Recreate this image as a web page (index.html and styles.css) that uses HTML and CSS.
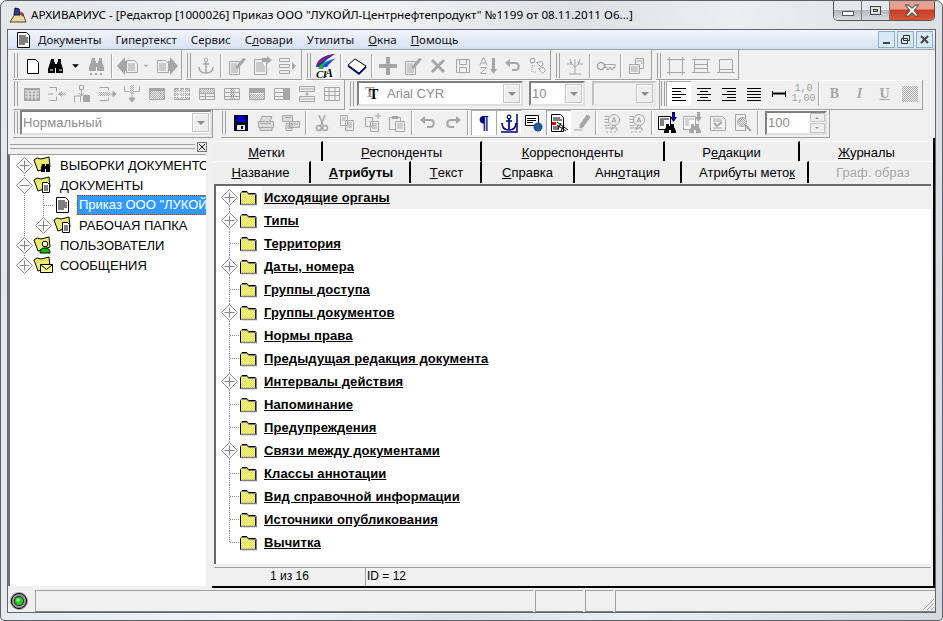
FILE: index.html
```html
<!DOCTYPE html>
<html lang="ru">
<head>
<meta charset="utf-8">
<title>АРХИВАРИУС</title>
<link rel="stylesheet" href="styles.css">
</head>
<body>
<svg class="defs" aria-hidden="true">
<defs>
<pattern id="dy" width="2" height="2" patternUnits="userSpaceOnUse"><rect width="2" height="2" fill="#ffff40"/><rect width="1" height="1" fill="#d8d8a0"/><rect x="1" y="1" width="1" height="1" fill="#d8d8a0"/></pattern>
<pattern id="dg" width="2" height="2" patternUnits="userSpaceOnUse"><rect width="2" height="2" fill="#f4f4f4"/><rect width="1" height="1" fill="#a6a6a6"/><rect x="1" y="1" width="1" height="1" fill="#a6a6a6"/></pattern>
<symbol id="new" viewBox="0 0 20 20"><path d="M4.500 3.500h8l3 3v11h-11z" fill="#fff" stroke="currentColor"/></symbol>
<symbol id="bin" viewBox="0 0 20 20"><path d="M5 3h3v3h1v2h2V6h1V3h3v4l2 6v4h-7v-5h-1v5H2v-4l2-6z" fill="currentColor"/><path d="M4 14h3M13 14h3" stroke="#fff"/></symbol>
<symbol id="bing" viewBox="0 0 20 20"><path d="M5 2h3v3h1v2h2V5h1V2h3v4l2 5v4h-7v-4h-1v4H2v-4l2-5z" fill="currentColor"/><path d="M3 17h2v2H3zM8 17h2v2H8zM13 17h2v2h-2z" fill="currentColor"/></symbol>
<symbol id="drop" viewBox="0 0 20 20"><path d="M6 8h8l-4 4z" fill="currentColor"/></symbol>
<symbol id="back" viewBox="0 0 24 20"><path d="M9 1 1 10l8 9v-4h2V5H9z" fill="currentColor"/><path d="M10.500 4.500h8l3 3v9h-11z" fill="#f0f0f0" stroke="currentColor"/><path d="M12 8h7M12 10h7M12 12h7M12 14h7" stroke="currentColor"/></symbol>
<symbol id="fwd" viewBox="0 0 24 20"><path d="M15 1l8 9-8 9v-4h-2V5h2z" fill="currentColor"/><path d="M2.500 4.500h8l3 3v9h-11z" fill="#f0f0f0" stroke="currentColor"/><path d="M4 8h7M4 10h7M4 12h7M4 14h7" stroke="currentColor"/></symbol>
<symbol id="anchor" viewBox="0 0 20 20"><circle cx="10" cy="4" r="1.700" fill="none" stroke="currentColor"/><path d="M10 6v11M7 8h6M3 11c0 4 3 6 7 6s7-2 7-6" fill="none" stroke="currentColor" stroke-width="1.500"/></symbol>
<symbol id="docpen" viewBox="0 0 20 20"><path d="M2.500 5.500h10v13h-10z" fill="#f0f0f0" stroke="currentColor"/><path d="M4 8h6M4 10h6M4 12h7M4 14h7M4 16h7" stroke="currentColor"/><path d="M9 10 16 2l3 1-7 9-3 1z" fill="currentColor"/></symbol>
<symbol id="docarr" viewBox="0 0 20 20"><path d="M2.500 3.500h9l3 3v12h-12z" fill="#f0f0f0" stroke="currentColor"/><path d="M4 7h7M4 9h8M4 11h9M4 13h9M4 15h9" stroke="currentColor"/><path d="M10 2h5V0l5 4-5 4V6h-5z" fill="currentColor"/></symbol>
<symbol id="listarr" viewBox="0 0 20 20"><path d="M2.500 2.500h10v3h-10zM2.500 8.500h10v3h-10zM2.500 14.500h10v3h-10z" fill="#f0f0f0" stroke="currentColor"/><path d="M15 6l4 4-4 4z" fill="currentColor"/></symbol>
<symbol id="logo" viewBox="0 0 24 26"><path d="M2 14C3 6 10 2 21 1c-6 4-11 7-14 13z" fill="#1030e0"/><path d="M2 14C3 9 10 3 21 1c1 1-1 1 0 0-8 3-12 6-15 9z" fill="#f00020"/><path d="M4 16c2-5 7-8 16-10-6 3-9 6-11 10z" fill="#10c020"/><path d="M8 14c2-3 6-6 14-9-4 3-7 6-9 9z" fill="#2040ff"/><path d="M2 16h20v9H2z" fill="#fff"/><text x="2" y="25" class="logot">Cl</text><text x="11" y="24" class="logot2">A</text></symbol>
<symbol id="book" viewBox="0 0 20 20"><path d="M1 9 8 3l11 7-7 7z" fill="#fff" stroke="#000"/><path d="M1 10l11 8 7-7" fill="none" stroke="#000080" stroke-width="1.500"/></symbol>
<symbol id="plus" viewBox="0 0 20 20"><path d="M8 1h4v7h7v4h-7v7H8v-7H1V8h7z" fill="currentColor"/></symbol>
<symbol id="x" viewBox="0 0 20 20"><path d="M3 5l2-2 5 5 5-5 2 2-5 5 5 5-2 2-5-5-5 5-2-2 5-5z" fill="currentColor"/></symbol>
<symbol id="sv" viewBox="0 0 20 20"><path d="M3.500 3.500h13v13h-13z" fill="#f0f0f0" stroke="currentColor"/><path d="M6.500 3.500h7v5h-7zM6.500 11.500h7v5h-7z" fill="none" stroke="currentColor"/></symbol>
<symbol id="az" viewBox="0 0 20 20"><path d="M14 2h3v11h2l-3.500 5L12 13h2z" fill="currentColor"/><path d="M2 9l3-7h1l3 7M3.500 7h4M2.500 11.500h6L2.500 17.500h6" fill="none" stroke="currentColor"/></symbol>
<symbol id="undo" viewBox="0 0 20 20"><path d="M4 7h8c5 0 5 7 0 7H9" fill="none" stroke="currentColor" stroke-width="2"/><path d="M2 7l5-4v8z" fill="currentColor"/></symbol>
<symbol id="redo" viewBox="0 0 20 20"><path d="M16 7H8c-5 0-5 7 0 7h3" fill="none" stroke="currentColor" stroke-width="2"/><path d="M18 7l-5-4v8z" fill="currentColor"/></symbol>
<symbol id="kids" viewBox="0 0 20 20"><path d="M2.500 2.500h4v4h-4zM8.500 6.500l5-1 2 3-3 2zM10.500 12.500l5-1 2 3-3 3z" fill="#f0f0f0" stroke="currentColor"/><path d="M4 7v9h5M4 10h4" fill="none" stroke="currentColor" stroke-dasharray="1 1"/></symbol>
<symbol id="bare" viewBox="0 0 20 20"><path d="M10 18V9M10 11 5 6M10 11l5-5M7 8H2M13 8h5M7 8 5 3M13 8l2-5M10 9V3M4 18h12" fill="none" stroke="currentColor"/></symbol>
<symbol id="key" viewBox="0 0 20 20"><circle cx="5" cy="10" r="3.500" fill="none" stroke="currentColor" stroke-width="1.500"/><path d="M9 8.500h10v3h-2v2h-2v-2h-2v2h-2v-2H9z" fill="none" stroke="currentColor"/></symbol>
<symbol id="docs" viewBox="0 0 20 20"><path d="M8.500 2.500h8v10h-8z" fill="#f0f0f0" stroke="currentColor"/><path d="M2.500 8.500h10v9h-10z" fill="#f0f0f0" stroke="currentColor"/><path d="M4 11h7M4 13h7M4 15h7M10 5h5M14 7h2" stroke="currentColor"/></symbol>
<symbol id="fr1" viewBox="0 0 20 20"><path d="M3.500 3.500h13v13h-13zM1 3.500h18M1 16.500h18M3.500 1v18M16.500 1v18" fill="none" stroke="currentColor"/></symbol>
<symbol id="fr2" viewBox="0 0 20 20"><path d="M3.500 3.500h13v13h-13zM3.500 8.500h13M3.500 12.500h13M1 3.500h18M1 16.500h18" fill="none" stroke="currentColor"/></symbol>
<symbol id="fr3" viewBox="0 0 20 20"><path d="M3.500 3.500h13v13h-13zM3.500 13.500h13M1 16.500h18M5 3.500h10" fill="none" stroke="currentColor"/></symbol>
<symbol id="tab" viewBox="0 0 20 20"><path d="M2 4h16v13H2z" fill="currentColor"/><path d="M3 7h14M3 10h14M3 13h14M6 7v9M10 7v9M14 7v9" stroke="#eee"/></symbol>
<symbol id="sp1" viewBox="0 0 20 20"><path d="M2.500 3.500h7v4M2.500 16.500h7v-4M1 10h5" fill="none" stroke="currentColor"/><path d="M11 10l4-3v6z" fill="currentColor"/><path d="M14 8.500h5v3h-5z" fill="url(#dg)"/></symbol>
<symbol id="sp2" viewBox="0 0 20 20"><path d="M7.500 1.500h4v4h-4zM2.500 18v-6h6v6" fill="none" stroke="currentColor"/><path d="M11 11h7v7h-7z" fill="currentColor"/><path d="M9.500 6v5M7 9l2.500 3L12 9" fill="none" stroke="currentColor"/></symbol>
<symbol id="sp3" viewBox="0 0 20 20"><path d="M2.500 3.500h9v3M2.500 16.500h9v-3" fill="none" stroke="currentColor"/><path d="M1.500 8h12v4h-12z" fill="url(#dg)"/><path d="M14 10l5 0M16 7l3 3-3 3z" fill="currentColor" stroke="currentColor"/></symbol>
<symbol id="sp4" viewBox="0 0 20 20"><path d="M2.500 2.500v5h5M17.500 2.500v5h-5" fill="none" stroke="currentColor"/><path d="M8 1h4v9H8z" fill="url(#dg)"/><path d="M10 10v7M7 14l3 4 3-4z" fill="currentColor" stroke="currentColor"/></symbol>
<symbol id="t1" viewBox="0 0 20 20"><path d="M2.500 4.500h15v11h-15z" fill="url(#dg)" stroke="currentColor"/><path d="M2 4h16v3H2z" fill="currentColor"/></symbol>
<symbol id="t2" viewBox="0 0 20 20"><path d="M2.500 4.500h15v11h-15z" fill="url(#dg)" stroke="currentColor"/><path d="M7.500 4v11M12.500 4v11M2 8.500h16M2 12.500h16" stroke="#eee"/></symbol>
<symbol id="t3" viewBox="0 0 20 20"><path d="M2.500 4.500h15v11h-15z" fill="#eee" stroke="currentColor"/><path d="M3 5h14v4H3z" fill="url(#dg)"/><path d="M2 9.500h16M2 12.500h16M8.500 9v6" stroke="currentColor"/></symbol>
<symbol id="t4" viewBox="0 0 20 20"><path d="M2.500 4.500h15v11h-15z" fill="#eee" stroke="currentColor"/><path d="M8 5h5v10H8z" fill="url(#dg)"/><path d="M2 8.500h16M2 12.500h16" stroke="currentColor"/></symbol>
<symbol id="t5" viewBox="0 0 20 20"><path d="M2.500 4.500h15v11h-15z" fill="#eee" stroke="currentColor"/><path d="M2 4h16v5H2z" fill="currentColor"/><path d="M3 10h14v5H3z" fill="url(#dg)"/></symbol>
<symbol id="t6" viewBox="0 0 20 20"><path d="M2.500 4.500h15v11h-15z" fill="#eee" stroke="currentColor"/><path d="M11 4h7v12h-7z" fill="currentColor"/><path d="M2 8.500h9M2 12.500h9" stroke="currentColor"/></symbol>
<symbol id="t7" viewBox="0 0 20 20"><path d="M2.500 2.500h15v5h-15zM2.500 12.500h15v5h-15zM2.500 5h15M2.500 15h15M10 8v4M8 10h4" fill="none" stroke="currentColor"/></symbol>
<symbol id="t8" viewBox="0 0 20 20"><path d="M2.500 3.500h15v13h-15zM2.500 7.500h15M2.500 11.500h15M7 3.500v13M13 3.500v13" fill="none" stroke="currentColor"/></symbol>
<symbol id="alignl" viewBox="0 0 20 20"><path d="M3 4.500h14M3 7.500h9M3 10.500h14M3 13.500h9M3 16.500h14" stroke="#000"/></symbol>
<symbol id="alignc" viewBox="0 0 20 20"><path d="M3 4.500h14M6 7.500h8M3 10.500h14M6 13.500h8M3 16.500h14" stroke="#000"/></symbol>
<symbol id="alignr" viewBox="0 0 20 20"><path d="M3 4.500h14M8 7.500h9M3 10.500h14M8 13.500h9M3 16.500h14" stroke="#000"/></symbol>
<symbol id="alignj" viewBox="0 0 20 20"><path d="M3 4.500h14M3 7.500h14M3 10.500h14M3 13.500h14M3 16.500h14" stroke="#000"/></symbol>
<symbol id="line" viewBox="0 0 20 20"><path d="M3 9.500h14" stroke="#000" stroke-width="2"/><path d="M3.500 7v6M16.500 7v6" stroke="#000"/></symbol>
<symbol id="dots" viewBox="0 0 20 20"><path d="M2 2h16v16H2z" fill="url(#dg)"/></symbol>
<symbol id="floppy" viewBox="0 0 20 20"><path d="M3 2h14v16H3z" fill="#000"/><path d="M6 3h8v6H6z" fill="#0000d0"/><path d="M4 4h1v13H4zM15 4h1v13h-1z" fill="#0000a0"/><path d="M6 12h8v5H6z" fill="#e8e8ff"/><path d="M10 13h2v3h-2z" fill="#000"/></symbol>
<symbol id="print" viewBox="0 0 20 20"><path d="M6 3.500h10l-2 5H4zM2.500 8.500h15v6h-15zM4 14.500h12v3H4z" fill="#ddd" stroke="currentColor"/><path d="M4 10.500h11" stroke="currentColor"/></symbol>
<symbol id="print2" viewBox="0 0 20 20"><path d="M1.500 2.500h10v6h-10zM8.500 8.500h10v6h-10zM5 10.500h6v7H5z" fill="#ddd" stroke="currentColor"/><path d="M4 4.500h6M10 11h7M6.500 13h4M6.500 15h4" stroke="currentColor"/></symbol>
<symbol id="cut" viewBox="0 0 20 20"><path d="M7 2l4 10M13 2l-4 10" stroke="currentColor" stroke-width="1.500" fill="none"/><circle cx="7" cy="15" r="2.500" fill="none" stroke="currentColor" stroke-width="1.500"/><circle cx="13" cy="15" r="2.500" fill="none" stroke="currentColor" stroke-width="1.500"/></symbol>
<symbol id="copy" viewBox="0 0 20 20"><path d="M3.500 2.500h7v10h-7zM8.500 7.500h8v10h-8z" fill="#eee" stroke="currentColor"/><path d="M5 5h4M5 7h3M10 10h5M10 12h5M10 14h5" stroke="currentColor"/></symbol>
<symbol id="copyp" viewBox="0 0 20 20"><path d="M3.500 4.500h7v9h-7zM8.500 8.500h8v10h-8z" fill="#eee" stroke="currentColor"/><path d="M10 11h5M10 13h5M10 15h5M16 0v6M13 3h6" stroke="currentColor"/></symbol>
<symbol id="paste" viewBox="0 0 20 20"><path d="M2.500 4.500h11v12h-11z" fill="#eee" stroke="currentColor"/><path d="M5 3h6v3H5z" fill="currentColor"/><path d="M8.500 8.500h9v10h-9z" fill="#f4f4f4" stroke="currentColor"/><path d="M10 11h6M10 13h6M10 15h6" stroke="currentColor"/></symbol>
<symbol id="anchorb" viewBox="0 0 20 20"><circle cx="10" cy="4" r="1.800" fill="none" stroke="#000080" stroke-width="1.200"/><path d="M10 5v11M7 8h6M3 10c0 5 3 7 7 7s7-2 7-7" fill="none" stroke="#000080" stroke-width="1.700"/><path d="M18 1v18H2" fill="none" stroke="#000080" stroke-width="1.500"/></symbol>
<symbol id="globe" viewBox="0 0 20 20"><path d="M1.500 2.500h13v10h-13z" fill="#fff" stroke="#000"/><path d="M3 5.500h9M3 7.500h9M3 9.500h6" stroke="#000"/><circle cx="14" cy="14" r="4.500" fill="#2050b0"/><path d="M12 11l3 2-2 3zM15 15l2 1-2 2z" fill="#208020"/></symbol>
<symbol id="reddoc" viewBox="0 0 20 20"><path d="M2.500 1.500h9l3 3v14h-12z" fill="#fff" stroke="#000"/><path d="M4 5h7M4 7h9" stroke="#000"/><path d="M3 9h4v3H3z" fill="#e00000"/><path d="M8 9l11 8M8 12l9 6M4 14h6M4 16h6M12 10l-3 6M15 12l-3 6" stroke="#000" fill="none"/></symbol>
<symbol id="pen" viewBox="0 0 20 20"><path d="M8 12 15 2l3 2-7 10-3 1zM2 17h9" fill="currentColor" stroke="currentColor"/></symbol>
<symbol id="search" viewBox="0 0 20 20"><path d="M2.500 3.500h5M2.500 6.500h4M2.500 9.500h4M2.500 12.500h5" stroke="currentColor"/><circle cx="12" cy="7" r="5.500" fill="#eee" stroke="currentColor"/><path d="M9 17l2-5 3 1zM3 15h12v3M4 19h2M8 19h2M12 19h2" fill="none" stroke="currentColor"/><path d="M10 9.500l2-5 2 5M10.500 8h3" fill="none" stroke="currentColor"/></symbol>
<symbol id="docbin" viewBox="0 0 22 22"><path d="M1.500 4.500h12v13h-12z" fill="#fff" stroke="currentColor"/><path d="M3 7h9M3 9h4M3 11h4M3 13h4" stroke="currentColor"/><path d="M9 12h3v2h2v-2h3v3l2 4v2h-5v-3h-2v3H7v-2l2-4z" fill="currentColor"/><path d="M15 0h3v5h2l-3.500 5L13 5h2z" fill="var(--ar)"/></symbol>
<symbol id="check" viewBox="0 0 20 20"><path d="M2.500 3.500h12l3 3v11h-15z" fill="#f4f4f4" stroke="currentColor"/><path d="M5 6h8M5 8h9M5 15h9" stroke="currentColor"/><path d="M6 10l3 3 5-4" fill="none" stroke="currentColor" stroke-width="2"/></symbol>
<symbol id="mag" viewBox="0 0 20 20"><path d="M2.500 1.500h10v16h-10z" fill="#f4f4f4" stroke="currentColor"/><circle cx="9" cy="9" r="4.500" fill="url(#dg)" stroke="currentColor"/><path d="M12 12l6 6" stroke="currentColor" stroke-width="2"/></symbol>

<symbol id="dm" viewBox="0 0 26 23"><path d="M13.500 3.500l8 8-8 8-8-8z" fill="#fff" stroke="#888"/></symbol>
<symbol id="tp" viewBox="0 0 26 23"><path d="M13.500 0v23" stroke="#888" stroke-dasharray="1 1"/><use href="#dm"/><path d="M13.500 6.500v10M8.500 11.500h10" stroke="#888"/></symbol>
<symbol id="tp0" viewBox="0 0 26 23"><path d="M13.500 12v11" stroke="#888" stroke-dasharray="1 1"/><use href="#dm"/><path d="M13.500 6.500v10M8.500 11.500h10" stroke="#888"/></symbol>
<symbol id="tl" viewBox="0 0 26 23"><path d="M13.500 0v23M14 11.500h9" stroke="#888" stroke-dasharray="1 1"/></symbol>
<symbol id="te" viewBox="0 0 26 23"><path d="M13.500 0v11.500H23" fill="none" stroke="#888" stroke-dasharray="1 1"/></symbol>

<symbol id="q0" viewBox="0 0 20 20"><path d="M10.500 10v10" stroke="#888" stroke-dasharray="1 1"/><path d="M10.500 2.500l8 8-8 8-8-8z" fill="#fff" stroke="#888"/><path d="M10.500 5.500v10M5.500 10.500h10" stroke="#888"/></symbol>
<symbol id="qm" viewBox="0 0 20 20"><path d="M10.500 0v20" stroke="#888" stroke-dasharray="1 1"/><path d="M10.500 2.500l8 8-8 8-8-8z" fill="#fff" stroke="#888"/><path d="M5.500 10.500h10" stroke="#888"/></symbol>
<symbol id="qp" viewBox="0 0 20 20"><path d="M10.500 0v20" stroke="#888" stroke-dasharray="1 1"/><path d="M10.500 2.500l8 8-8 8-8-8z" fill="#fff" stroke="#888"/><path d="M10.500 5.500v10M5.500 10.500h10" stroke="#888"/></symbol>
<symbol id="qe" viewBox="0 0 20 20"><path d="M10.500 0v10" stroke="#888" stroke-dasharray="1 1"/><path d="M10.500 2.500l8 8-8 8-8-8z" fill="#fff" stroke="#888"/><path d="M10.500 5.500v10M5.500 10.500h10" stroke="#888"/></symbol>
<symbol id="qv" viewBox="0 0 20 20"><path d="M10.500 0v20" stroke="#888" stroke-dasharray="1 1"/></symbol>
<symbol id="qt" viewBox="0 0 20 20"><path d="M10.500 0v20M11 10.500h9" stroke="#888" stroke-dasharray="1 1"/></symbol>

<symbol id="fold" viewBox="0 0 18 16"><path d="M1.500 3.500 3 1.500h5l1.500 2h7v11h-15z" fill="url(#dy)" stroke="#000"/><path d="M2 14.500h15.500V4" fill="none" stroke="#808080" stroke-width="1.500"/><path d="M2 2.500h6l1.500 2h7.500" fill="none" stroke="#808080"/></symbol>
<symbol id="docsm" viewBox="0 0 18 18"><path d="M2.500 1.500h9l3 3v12h-12z" fill="#fff" stroke="#000"/><path d="M4 5h7M4 7h9M4 9h9M4 11h9M4 13h6" stroke="#000"/></symbol>
<symbol id="f" viewBox="0 0 20 18"><path d="M1 4l3-2 4 1 8-2 1 10-12 4z" fill="url(#dy)" stroke="#000"/></symbol>
<symbol id="fb" viewBox="0 0 20 18"><use href="#f"/><path d="M9 8h3v2h1V8h3l1 4v4h-4v-3h-1v3H8v-4z" fill="#000"/></symbol>
<symbol id="fd" viewBox="0 0 20 18"><use href="#f"/><path d="M9.500 6.500h5l2 2v8h-7z" fill="#fff" stroke="#000"/><path d="M11 10h4M11 12h4M11 14h4" stroke="#000"/></symbol>
<symbol id="fu" viewBox="0 0 20 18"><use href="#f"/><circle cx="12" cy="8" r="2.800" fill="#fff" stroke="#000"/><path d="M7 17c0-4 2-5 5-5s5 1 5 5z" fill="#00c000" stroke="#000"/></symbol>
<symbol id="fm" viewBox="0 0 20 18"><use href="#f"/><path d="M7.500 8.500h12v8h-12z" fill="#ffffa0" stroke="#000"/><path d="M7.500 8.500l6 5 6-5" fill="none" stroke="#000"/></symbol>
<symbol id="led" viewBox="0 0 20 20"><circle cx="10" cy="10" r="9" fill="#999"/><circle cx="10" cy="10" r="7.500" fill="none" stroke="#000"/><circle cx="10" cy="10" r="5" fill="#222"/><circle cx="10" cy="10" r="4" fill="#20d020"/><circle cx="9" cy="9" r="1.500" fill="#b0ffb0"/></symbol>
<symbol id="appic" viewBox="0 0 18 18"><path d="M1 16 6 8h8l3 8z" fill="#e8d8a0" stroke="#604020"/><path d="M6 2l4 1 1 6H5z" fill="#304080" stroke="#101040"/><path d="M11 5l4 3-2 3z" fill="#a03030"/></symbol>
</defs>
</svg>

<div class="win">
  <header class="title">
    <svg class="appicon"><use href="#appic"/></svg>
    <span class="title-text">АРХИВАРИУС - [Редактор [1000026] Приказ ООО "ЛУКОЙЛ-Центрнефтепродукт" №1199 от 08.11.2011 О6...]</span>
    <div class="caps">
      <div class="cap cap-min"><span class="g-min"></span></div>
      <div class="cap cap-max"><span class="g-max"></span></div>
      <div class="cap cap-close">
        <svg class="g-x" viewBox="0 0 14 12"><path d="M1 1h3l3 3 3-3h3L9 6l4 5h-3L7 8l-3 3H1l4-5z" fill="#fff" stroke="#555"/></svg>
      </div>
    </div>
  </header>

  <div class="client">
    <nav class="menu">
      <svg class="menu-ic"><use href="#docsm"/></svg>
      <span class="mi"><u>Д</u>окументы</span>
      <span class="mi">Гипертекст</span>
      <span class="mi">Сервис</span>
      <span class="mi">С<u>л</u>овари</span>
      <span class="mi">Утилиты</span>
      <span class="mi"><u>О</u>кна</span>
      <span class="mi"><u>П</u>омощь</span>
      <div class="mdi">
        <span class="mb"><svg viewBox="0 0 15 15"><path d="M4 10h7v2H4z" fill="#444"/></svg></span>
        <span class="mb"><svg viewBox="0 0 15 15"><path d="M5.500 3.500h6v5h-6zM3.500 6.500h6v5h-6z" fill="#d7e9f5" stroke="#333"/></svg></span>
        <span class="mb"><svg viewBox="0 0 15 15"><path d="M4 4l7 7M11 4l-7 7" stroke="#444" stroke-width="2"/></svg></span>
      </div>
    </nav>

    <div class="row r1">
      <div class="tb">
        <i class="grip"></i>
        <b class="c"><svg class="i k"><use href="#new"/></svg></b>
        <b class="c w22"><svg class="i k"><use href="#bin"/></svg></b>
        <b class="c w17"><svg class="i k"><use href="#drop"/></svg></b>
        <b class="c"><svg class="i"><use href="#bing"/></svg></b>
        <i class="s"></i>
        <b class="c"><svg class="iw"><use href="#back"/></svg></b>
        <b class="c w12"><svg class="i"><use href="#drop"/></svg></b>
        <b class="c w29"><svg class="iw"><use href="#fwd"/></svg></b>
      </div>
      <div class="tb">
        <i class="grip"></i>
        <b class="c"><svg class="i"><use href="#anchor"/></svg></b>
        <i class="s"></i>
        <b class="c"><svg class="i"><use href="#docpen"/></svg></b>
        <b class="c"><svg class="i"><use href="#docarr"/></svg></b>
        <b class="c"><svg class="i"><use href="#listarr"/></svg></b>
        <i class="pad"></i>
      </div>
      <div class="tb">
        <i class="grip"></i>
        <b class="c"><svg class="il"><use href="#logo"/></svg></b>
        <i class="s"></i>
        <b class="c"><svg class="i"><use href="#book"/></svg></b>
        <i class="s"></i>
        <b class="c"><svg class="i"><use href="#plus"/></svg></b>
        <b class="c"><svg class="i"><use href="#docpen"/></svg></b>
        <b class="c"><svg class="i"><use href="#x"/></svg></b>
        <b class="c"><svg class="i"><use href="#sv"/></svg></b>
        <b class="c"><svg class="i"><use href="#az"/></svg></b>
        <b class="c"><svg class="i"><use href="#undo"/></svg></b>
        <b class="c"><svg class="i"><use href="#kids"/></svg></b>
      </div>
      <div class="tb">
        <i class="grip"></i>
        <b class="c"><svg class="i"><use href="#bare"/></svg></b>
        <i class="s"></i>
        <b class="c"><svg class="i"><use href="#key"/></svg></b>
        <i class="s"></i>
        <b class="c"><svg class="i"><use href="#docs"/></svg></b>
        <i class="pad"></i>
      </div>
      <div class="tb">
        <i class="grip"></i>
        <b class="c"><svg class="i"><use href="#fr1"/></svg></b>
        <b class="c"><svg class="i"><use href="#fr2"/></svg></b>
        <b class="c"><svg class="i"><use href="#fr3"/></svg></b>
      </div>
    </div>

    <div class="row r2">
      <div class="tb">
        <i class="grip grip-n"></i>
        <b class="c"><svg class="i"><use href="#tab"/></svg></b>
        <b class="c"><svg class="i"><use href="#sp1"/></svg></b>
        <b class="c"><svg class="i"><use href="#sp2"/></svg></b>
        <b class="c"><svg class="i"><use href="#sp3"/></svg></b>
        <b class="c"><svg class="i"><use href="#sp4"/></svg></b>
        <b class="c"><svg class="i"><use href="#t1"/></svg></b>
        <b class="c"><svg class="i"><use href="#t2"/></svg></b>
        <b class="c"><svg class="i"><use href="#t3"/></svg></b>
        <b class="c"><svg class="i"><use href="#t4"/></svg></b>
        <b class="c"><svg class="i"><use href="#t5"/></svg></b>
        <b class="c"><svg class="i"><use href="#t6"/></svg></b>
        <b class="c"><svg class="i"><use href="#t7"/></svg></b>
        <b class="c"><svg class="i"><use href="#t8"/></svg></b>
      </div>
      <div class="tb">
        <i class="grip"></i>
        <div class="combo cb-font">
          <span class="tt"><span class="tt1">T</span><span class="tt2">T</span></span>
          <span class="cv">Arial CYR</span>
          <span class="arrow"></span>
        </div>
        <div class="combo cb-size"><span class="cv">10</span><span class="arrow"></span></div>
        <div class="combo cb-off"><span class="cv"></span><span class="arrow"></span></div>
      </div>
      <div class="tb tb-flush">
        <i class="grip grip-n"></i>
        <b class="c on"><svg class="i"><use href="#alignl"/></svg></b>
        <b class="c"><svg class="i"><use href="#alignc"/></svg></b>
        <b class="c"><svg class="i"><use href="#alignr"/></svg></b>
        <b class="c"><svg class="i"><use href="#alignj"/></svg></b>
        <b class="c"><svg class="i"><use href="#line"/></svg></b>
        <b class="c spacing">1,0<br>1,00</b>
        <i class="s"></i>
        <b class="c fmt fb">B</b>
        <b class="c fmt fi">I</b>
        <b class="c fmt fu">U</b>
        <b class="c"><svg class="i"><use href="#dots"/></svg></b>
      </div>
    </div>

    <div class="row r3">
      <div class="tb">
        <i class="grip"></i>
        <div class="combo cb-style"><span class="cv cv-style">Нормальный</span><span class="arrow"></span></div>
      </div>
      <div class="tb tb-last">
        <i class="grip"></i>
        <b class="c"><svg class="i"><use href="#floppy"/></svg></b>
        <b class="c"><svg class="i"><use href="#print"/></svg></b>
        <b class="c"><svg class="i"><use href="#print2"/></svg></b>
        <i class="s"></i>
        <b class="c"><svg class="i"><use href="#cut"/></svg></b>
        <b class="c"><svg class="i"><use href="#copy"/></svg></b>
        <b class="c"><svg class="i"><use href="#copyp"/></svg></b>
        <b class="c"><svg class="i"><use href="#paste"/></svg></b>
        <i class="s"></i>
        <b class="c"><svg class="i"><use href="#undo"/></svg></b>
        <b class="c"><svg class="i"><use href="#redo"/></svg></b>
        <i class="s"></i>
        <b class="c on pil">¶</b>
        <b class="c on"><svg class="i"><use href="#anchorb"/></svg></b>
        <b class="c"><svg class="i"><use href="#globe"/></svg></b>
        <b class="c on"><svg class="i"><use href="#reddoc"/></svg></b>
        <b class="c w22"><svg class="i"><use href="#pen"/></svg></b>
        <i class="s"></i>
        <b class="c"><svg class="i"><use href="#search"/></svg></b>
        <b class="c"><svg class="i"><use href="#search"/></svg></b>
        <i class="s"></i>
        <b class="c k navy"><svg class="ib"><use href="#docbin"/></svg></b>
        <b class="c gray-ar"><svg class="ib"><use href="#docbin"/></svg></b>
        <b class="c"><svg class="i"><use href="#check"/></svg></b>
        <b class="c"><svg class="i"><use href="#mag"/></svg></b>
        <i class="s"></i>
        <div class="spin">
          <span class="spin-v">100</span>
          <span class="spin-btns"><span class="sb sb-u"></span><span class="sb sb-d"></span></span>
        </div>
      </div>
    </div>

    <main class="main">
      <aside class="left">
        <div class="left-head"><i class="lh-grip"></i><span class="lh-x"><svg viewBox="0 0 9 9"><path d="M1 1l7 7M8 1 1 8" stroke="#000"/></svg></span></div>
        <div class="tree">
          <div class="tr"><svg class="tw"><use href="#q0"/></svg><svg class="ti"><use href="#fb"/></svg><span class="tt-l">ВЫБОРКИ ДОКУМЕНТОВ</span></div>
          <div class="tr"><svg class="tw"><use href="#qm"/></svg><svg class="ti"><use href="#fd"/></svg><span class="tt-l">ДОКУМЕНТЫ</span></div>
          <div class="tr"><svg class="tw"><use href="#qv"/></svg><svg class="tw tw-c"><use href="#qt"/></svg><svg class="td"><use href="#docsm"/></svg><span class="tt-sel">Приказ ООО "ЛУКОЙЛ-Центрнефтепродукт"</span></div>
          <div class="tr"><svg class="tw"><use href="#qv"/></svg><svg class="tw tw-c"><use href="#qe"/></svg><svg class="ti ti-c"><use href="#fd"/></svg><span class="tt-l tt-c">РАБОЧАЯ ПАПКА</span></div>
          <div class="tr"><svg class="tw"><use href="#qp"/></svg><svg class="ti"><use href="#fu"/></svg><span class="tt-l">ПОЛЬЗОВАТЕЛИ</span></div>
          <div class="tr"><svg class="tw"><use href="#qe"/></svg><svg class="ti"><use href="#fm"/></svg><span class="tt-l">СООБЩЕНИЯ</span></div>
        </div>
      </aside>

      <section class="right">
        <div class="tabs">
          <span class="tab w110"><u>М</u>етки</span>
          <span class="tab w159"><u>Р</u>еспонденты</span>
          <span class="tab w183"><u>К</u>орреспонденты</span>
          <span class="tab w135">Р<u>е</u>дакции</span>
          <span class="tab w134"><u>Ж</u>урналы</span>
        </div>
        <div class="tabs tabs-b">
          <span class="tab w98"><u>Н</u>азвание</span>
          <span class="tab w100 cur"><u>А</u>трибуты</span>
          <span class="tab w71"><u>Т</u>екст</span>
          <span class="tab w93"><u>С</u>правка</span>
          <span class="tab w107">Анн<u>о</u>тация</span>
          <span class="tab w127">Атрибуты мето<u>к</u></span>
          <span class="tab w125 dis">Граф. образ</span>
        </div>
        <div class="pane">
          <div class="ar"><svg class="aw"><use href="#tp0"/></svg><svg class="af"><use href="#fold"/></svg><span class="at at-cur">Исходящие органы</span></div>
          <div class="ar"><svg class="aw"><use href="#tp"/></svg><svg class="af"><use href="#fold"/></svg><span class="at">Типы</span></div>
          <div class="ar"><svg class="aw"><use href="#tl"/></svg><svg class="af"><use href="#fold"/></svg><span class="at">Территория</span></div>
          <div class="ar"><svg class="aw"><use href="#tp"/></svg><svg class="af"><use href="#fold"/></svg><span class="at">Даты, номера</span></div>
          <div class="ar"><svg class="aw"><use href="#tl"/></svg><svg class="af"><use href="#fold"/></svg><span class="at">Группы доступа</span></div>
          <div class="ar"><svg class="aw"><use href="#tp"/></svg><svg class="af"><use href="#fold"/></svg><span class="at">Группы документов</span></div>
          <div class="ar"><svg class="aw"><use href="#tl"/></svg><svg class="af"><use href="#fold"/></svg><span class="at">Нормы права</span></div>
          <div class="ar"><svg class="aw"><use href="#tl"/></svg><svg class="af"><use href="#fold"/></svg><span class="at">Предыдущая редакция документа</span></div>
          <div class="ar"><svg class="aw"><use href="#tp"/></svg><svg class="af"><use href="#fold"/></svg><span class="at">Интервалы действия</span></div>
          <div class="ar"><svg class="aw"><use href="#tl"/></svg><svg class="af"><use href="#fold"/></svg><span class="at">Напоминание</span></div>
          <div class="ar"><svg class="aw"><use href="#tl"/></svg><svg class="af"><use href="#fold"/></svg><span class="at">Предупреждения</span></div>
          <div class="ar"><svg class="aw"><use href="#tp"/></svg><svg class="af"><use href="#fold"/></svg><span class="at">Связи между документами</span></div>
          <div class="ar"><svg class="aw"><use href="#tl"/></svg><svg class="af"><use href="#fold"/></svg><span class="at">Классы аннотации</span></div>
          <div class="ar"><svg class="aw"><use href="#tl"/></svg><svg class="af"><use href="#fold"/></svg><span class="at">Вид справочной информации</span></div>
          <div class="ar"><svg class="aw"><use href="#tl"/></svg><svg class="af"><use href="#fold"/></svg><span class="at">Источники опубликования</span></div>
          <div class="ar"><svg class="aw"><use href="#te"/></svg><svg class="af"><use href="#fold"/></svg><span class="at">Вычитка</span></div>
        </div>
        <div class="pane-foot"><span class="pf-a">1 из 16</span><span class="pf-b">ID = 12</span></div>
      </section>
    </main>

    <footer class="status">
      <span class="st-led"><svg><use href="#led"/></svg></span>
      <span class="st st1"></span>
      <span class="st st2"></span>
      <span class="st st3"></span>
      <span class="st st4"><svg class="sizer" viewBox="0 0 14 14"><path d="M13 2 2 13M13 6l-7 7M13 10l-3 3" stroke="#999" fill="none"/></svg></span>
    </footer>
  </div>
</div>
</body>
</html>
```

FILE: styles.css
```css
* { box-sizing: border-box; }
html, body { margin: 0; padding: 0; height: 100%; overflow: hidden; background: #fff; }
.defs { position: absolute; width: 0; height: 0; }

.win {
  width: 943px; height: 621px;
  display: flex; flex-direction: column;
  padding: 0 6px 7px 6px;
  background: linear-gradient(100deg, #e3e7ea 0%, #f2f3f4 35%, #dde2e6 55%, #eceef0 70%, #d5dade 100%);
  border: 1px solid #5c6066;
  border-radius: 7px 7px 4px 4px;
  font-family: "Liberation Sans", Arial, sans-serif;
  color: #000;
}
.title { height: 28px; flex: none; display: flex; align-items: flex-start; }
.appicon { width: 18px; height: 18px; margin: 5px 4px 0 2px; flex: none; }
.title-text { font: 11.670px/14px "Noto Sans", sans-serif; margin-top: 7px; white-space: nowrap; color: #000; }
.caps { margin-left: auto; margin-right: 1px; display: flex; height: 20px; border: 1px solid #555; border-top: 0; border-radius: 0 0 5px 5px; overflow: hidden; }
.cap { height: 19px; display: flex; align-items: center; justify-content: center; background: linear-gradient(#e4e8ec 0 45%, #b4b9be 50%, #d8dcdf); border-right: 1px solid #777; }
.cap-min, .cap-max { width: 28px; }
.cap-close { width: 44px; border-right: 0; background: linear-gradient(#e8a090 0 40%, #c83c28 50%, #d8583a 100%); }
.g-min { width: 12px; height: 5px; background: #fff; border: 1px solid #555; margin-top: 5px; }
.g-max { width: 11px; height: 9px; border: 1px solid #444; box-shadow: inset 0 0 0 2px #ddd, inset 0 0 0 3px #444; }
.g-x { width: 16px; height: 13px; }

.client { flex: 1; min-height: 0; display: flex; flex-direction: column; background: #f0f0f0; border: 1px solid #62666c; }

.menu { height: 20px; flex: none; display: flex; align-items: center; padding-left: 7px; background: linear-gradient(#f2f5fb, #dbe5f4 80%, #d3ddee); border-bottom: 1px solid #a0a0a0; font: 11.500px/14px "Noto Sans", sans-serif; color: #111; }
.menu-ic { width: 18px; height: 18px; flex: none; margin-right: 5px; }
.mi { margin-right: 14px; white-space: nowrap; }
.mdi { margin-left: auto; margin-right: 2px; display: flex; gap: 2px; }
.mb { width: 17px; height: 17px; background: #d7e9f5; border: 1px solid #8db0c6; display: flex; }
.mb svg { width: 15px; height: 15px; }

.row { flex: none; display: flex; padding-left: 5px; }
.r1 { height: 30px; }
.r2 { height: 30px; }
.r3 { height: 28px; }
.tb { display: flex; align-items: center; height: 100%; margin-right: 4px; background: #f0f0f0; border-right: 1px solid #a0a0a0; border-bottom: 1px solid #a0a0a0; box-shadow: inset 0 1px 0 #fff; }
.r1 .tb { padding-top: 2px; }
.r2 .tb, .r3 .tb { padding-bottom: 2px; }
.tb-flush { margin-right: 0; margin-left: -4px; }
.tb-last { margin-left: 4px; }
.grip { width: 7px; height: 100%; flex: none; display: block; background: linear-gradient(#a0a0a0, #a0a0a0) 1px 1px / 1px calc(100% - 2px) no-repeat, linear-gradient(#a0a0a0, #a0a0a0) 4px 1px / 1px calc(100% - 2px) no-repeat; }
.grip-n { width: 6px; }
.c { width: 25px; height: 25px; flex: none; display: flex; align-items: center; justify-content: center; color: #a6a6a6; font-weight: normal; }
.w12 { width: 12px; } .w17 { width: 17px; } .w22 { width: 22px; } .w29 { width: 29px; }
.k, .c.k { color: #000; }
.s { width: 2px; height: 24px; margin: 0 2px; flex: none; background: #a8a8a8; border-right: 1px solid #fff; display: block; }
.pad { width: 2px; display: block; }
.i { width: 20px; height: 20px; }
.iw { width: 24px; height: 20px; }
.il { width: 24px; height: 26px; }
.ib { width: 22px; height: 22px; }
.navy { --ar: #000080; }
.gray-ar { --ar: #a6a6a6; }
.logot { font: italic bold 11px "Liberation Serif", serif; fill: #000; }
.logot2 { font: italic bold 12px "Liberation Serif", serif; fill: #000; }

.on { background: #fff; border-left: 1px solid #a8a8a8; border-top: 1px solid #a8a8a8; }
.pil { color: #000080; font: bold 19px/24px "Liberation Serif", serif; }
.spacing { font: 10px/10px "Liberation Mono", monospace; text-align: center; color: #a0a0a0; }
.fmt { font-size: 14px; font-family: "Liberation Serif", serif; font-weight: bold; }
.fi { font-style: italic; }
.fu { text-decoration: underline; }

.combo { height: 25px; flex: none; display: flex; align-items: center; background: #fff; border: 2px solid; border-color: #808080 #e0e0e0 #e0e0e0 #808080; padding-right: 1px; }
.cb-font { width: 166px; margin-left: 1px; }
.cb-size { width: 56px; margin-left: 6px; }
.cb-off { width: 64px; margin-left: 7px; margin-right: 3px; background: #f0f0f0; border-color: #c4c4c4 #e8e8e8 #e8e8e8 #c4c4c4; }
.cb-style { width: 192px; }
.cv { flex: 1; min-width: 0; color: #8c8c8c; font-size: 13px; white-space: nowrap; padding-left: 1px; }
.cv-style { letter-spacing: .1px; }
.tt { position: relative; width: 21px; height: 18px; flex: none; margin-left: 6px; font: bold 14px/18px "Liberation Serif", serif; }
.tt1 { position: absolute; left: 0; top: -1px; color: #999; }
.tt2 { position: absolute; left: 4px; top: 1px; color: #000; }
.arrow { width: 17px; height: 19px; flex: none; background: #eee; border: 1px solid #c4c4c4; position: relative; box-shadow: inset 1px 1px 0 #fff; }
.arrow::after { content: ""; position: absolute; left: 4px; top: 7px; border: 4px solid transparent; border-top: 4px solid #8c8c8c; border-bottom: 0; }

.spin { width: 62px; height: 24px; margin-left: 4px; margin-right: 2px; flex: none; display: flex; background: #fff; border: 2px solid; border-color: #808080 #e0e0e0 #e0e0e0 #808080; }
.spin-v { flex: 1; color: #8c8c8c; font-size: 13px; line-height: 20px; padding-left: 1px; }
.spin-btns { width: 15px; display: flex; flex-direction: column; gap: 1px; }
.sb { flex: 1; background: #eee; border: 1px solid #c4c4c4; position: relative; }
.sb::after { content: ""; position: absolute; left: 4px; top: 3px; border: 2px solid transparent; }
.sb-u::after { border-bottom-color: #999; border-top: 0; }
.sb-d::after { border-top-color: #999; border-bottom: 0; }

.main { flex: 1; min-height: 0; display: flex; }
.left { width: 200px; flex: none; display: flex; flex-direction: column; padding-top: 1px; }
.left-head { height: 15px; flex: none; display: flex; align-items: center; padding-left: 2px; }
.lh-grip { flex: 1; height: 5px; border-top: 1px solid #a0a0a0; border-bottom: 1px solid #a0a0a0; display: block; }
.lh-x { width: 10px; height: 10px; margin: 0 1px 0 2px; background: #eee; border: 1px solid #777; display: flex; }
.lh-x svg { width: 8px; height: 8px; }
.tree { flex: 1; min-height: 0; background: #fff; border-left: 2px solid #707070; border-top: 1px solid #a0a0a0; padding: 0 0 0 4px; overflow: hidden; margin-bottom: 2px; font-size: 13px; margin-right: 2px; }
.tr { height: 20px; display: flex; align-items: center; white-space: nowrap; }
.tw { width: 20px; height: 20px; flex: none; }
.tw-c { margin-left: -1px; }
.ti { width: 20px; height: 18px; flex: none; margin-left: -1px; }
.ti-c { margin-left: 0; }
.td { width: 18px; height: 18px; flex: none; margin-left: 1px; }
.tt-l { margin-left: 7px; }
.tt-c { margin-left: 6px; }
.tt-sel { margin-left: 5px; height: 20px; line-height: 20px; background: #3399ff; color: #fff; padding-left: 2px; outline: 1px dotted #c04000; outline-offset: -1px; }

.right { flex: 1; min-width: 0; margin-left: 4px; display: flex; flex-direction: column; padding-top: 3px; border-right: 2px solid #000; border-bottom: 2px solid #000; }
.tabs { height: 20px; flex: none; display: flex; }
.tabs-b { height: 22px; }
.tab { display: flex; align-items: center; justify-content: center; padding-top: 2px; font-size: 13px; background: #efefef; border-right: 2px solid #000; border-top: 1px solid #fff; border-radius: 3px 0 0 0; white-space: nowrap; }
.tabs-b .tab { padding-top: 0; }
.tabs-b .w100, .tabs-b .w71 { padding-left: 2px; }
.tabs-b .w127 { padding-left: 5px; }
.tabs-b .w125 { padding-left: 4px; }
.tab:last-child { border-right: 0; }
.w110 { width: 111px; } .w159 { width: 159px; } .w183 { width: 183px; } .w135 { width: 135px; } .w134 { width: 133px; }
.w98 { width: 99px; } .w100 { width: 100px; } .w71 { width: 71px; } .w93 { width: 93px; } .w107 { width: 107px; } .w127 { width: 127px; } .w125 { width: 124px; }
.cur { font-weight: bold; }
.dis { color: #a0a0a0; text-shadow: 1px 1px 0 #fff; }
.pane { height: 380px; flex: none; margin: 1px 2px 0 2px; background: #fff; border-left: 2px solid #696969; border-top: 2px solid #696969; padding-bottom: 1px; overflow: hidden; }
.ar { height: 23px; display: flex; align-items: center; }
.aw { width: 26px; height: 23px; flex: none; }
.af { width: 18px; height: 16px; flex: none; margin-left: -3px; }
.at { flex: 1; align-self: stretch; margin-left: 5px; padding-left: 2px; font: bold 13px/23px "Liberation Sans", sans-serif; letter-spacing: .1px; text-decoration: underline; }
.at-cur { background: #f0f0f0; }
.pane-foot { flex: 1; min-height: 0; display: flex; margin: 3px 2px 0 2px; border-top: 1px solid #a0a0a0; font-size: 12px; line-height: 17px; }
.pf-a { width: 151px; text-align: center; }
.pf-b { border-left: 1px solid #a0a0a0; padding-left: 1px; }

.status { height: 24px; flex: none; display: flex; align-items: stretch; padding-top: 2px; }
.st-led { width: 27px; padding-right: 6px; display: flex; align-items: center; justify-content: center; }
.st-led svg { width: 20px; height: 20px; flex: none; }
.st { border-top: 1px solid #a0a0a0; border-left: 1px solid #a0a0a0; border-bottom: 1px solid #808080; margin-right: 2px; flex: none; position: relative; }
.st1 { width: 498px; }
.st2 { width: 48px; }
.st3 { width: 28px; }
.st4 { flex: 1; margin-right: 0; }
.sizer { position: absolute; right: 0; bottom: 0; width: 14px; height: 14px; }
```
